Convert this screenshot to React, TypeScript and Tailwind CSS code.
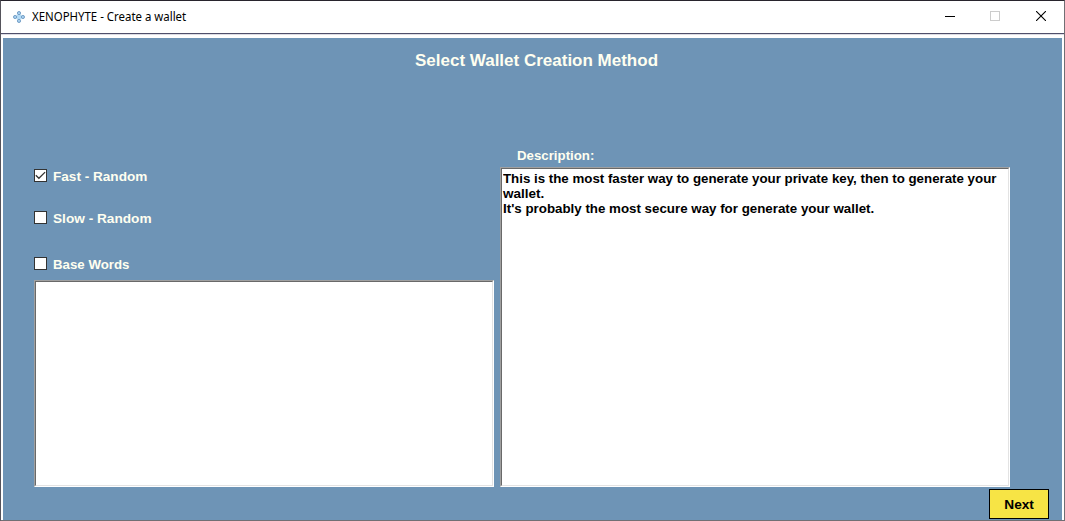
import { useState } from "react";

const methods = [
  { label: "Fast - Random", row: "h-[42px]", stretch: "scale-x-[1.045]" },
  { label: "Slow - Random", row: "h-[46px]", stretch: "scale-x-[1.05]" },
  { label: "Base Words", row: "h-[23px]", stretch: "scale-x-[1.02]" },
];

const description = [
  { text: "This is the most faster way to generate your private key, then to generate your", stretch: "scale-x-[1.023]" },
  { text: "wallet.", stretch: "scale-x-[1.04]" },
  { text: "It's probably the most secure way for generate your wallet.", stretch: "scale-x-[1.025]" },
];

const sunken =
  "border border-t-[#a0a0a0] border-l-[#a0a0a0] border-r-white border-b-white";
const sunkenInner =
  "h-full w-full border border-t-[#696969] border-l-[#696969] border-r-[#e3e3e3] border-b-[#e3e3e3] bg-white";

function AppIcon() {
  return (
    <svg width="12" height="12" viewBox="0 0 12 12" className="mb-px ml-[12px] shrink-0">
      <rect x="3.6" y="3.6" width="4.8" height="4.8" fill="#b5dbf5" />
      <g fill="#a9d0ef" stroke="#6a97c2" strokeWidth="0.9">
        <circle cx="6" cy="2.1" r="1.6" />
        <circle cx="2.1" cy="6" r="1.6" />
        <circle cx="9.9" cy="6" r="1.6" />
        <circle cx="6" cy="9.9" r="1.6" />
      </g>
    </svg>
  );
}

function TitleBar() {
  return (
    <header className="flex h-[32px] shrink-0 items-center bg-white">
      <AppIcon />
      <h1 className="ml-[7px] origin-left scale-x-[0.952] font-['Noto_Sans',sans-serif] text-[12px] leading-[16px] whitespace-nowrap text-black">
        XENOPHYTE - Create a wallet
      </h1>
      <div className="ml-auto flex h-full">
        <button aria-label="Minimize" className="flex w-[44px] items-center justify-center">
          <svg width="10" height="10" viewBox="0 0 10 10" shapeRendering="crispEdges"><path d="M0 4.5H10" stroke="#000" /></svg>
        </button>
        <button aria-label="Maximize" className="flex w-[46px] items-center justify-center">
          <svg width="10" height="10" viewBox="0 0 10 10" className="mb-[2px]" shapeRendering="crispEdges"><rect x="0.5" y="0.5" width="9" height="9" fill="none" stroke="#ccc" /></svg>
        </button>
        <button aria-label="Close" className="flex w-[46px] items-center justify-center">
          <svg width="10" height="10" viewBox="0 0 10 10" className="mb-[2px]"><path d="M0 0L10 10M10 0L0 10" stroke="#000" strokeWidth="1.1" /></svg>
        </button>
      </div>
    </header>
  );
}

export default function App() {
  const [selected, setSelected] = useState(0);
  return (
    <div className="flex h-[521px] w-[1065px] flex-col overflow-hidden border border-t-[#28242d] border-r-[#706f74] border-b-[#706f74] border-l-[#55535b] bg-white font-['Liberation_Sans',Arial,sans-serif]">
      <TitleBar />
      <div className="h-px shrink-0 bg-[#50506b]" />
      <div className="h-px shrink-0 bg-[#dcdce4]" />
      <main className="mt-[3px] mr-[2px] ml-[2px] flex min-h-0 flex-1 flex-col bg-[#6e94b6]">
        <h2 className="h-[109px] shrink-0 pt-[13px] pl-[8px] text-center text-[17px] leading-[20px] font-bold text-[#fffff0]">
          <span className="inline-block whitespace-nowrap">Select Wallet Creation Method</span>
        </h2>
        <div className="flex h-[340px] shrink-0 pl-[31px]">
          <section className="flex w-[460px] flex-col pt-[22px]">
            {methods.map((m, i) => (
              <div key={m.label} className={m.row}>
                <button
                  role="checkbox"
                  aria-checked={selected === i}
                  onClick={() => setSelected(i)}
                  className="flex items-start"
                >
                  <span className="flex h-[13px] w-[13px] shrink-0 items-center justify-center border border-[#333] bg-white">
                    {selected === i && (
                      <svg width="11" height="11" viewBox="0 0 11 11" fill="none"><path d="M0.8 5.2L3.9 8.3L10.1 2.1" stroke="#333" strokeWidth="1.3" /></svg>
                    )}
                  </span>
                  <span className={`ml-[6px] origin-left text-[13px] leading-[16px] font-bold whitespace-nowrap text-[#fffff0] ${m.stretch}`}>
                    {m.label}
                  </span>
                </button>
              </div>
            ))}
            <div className={`h-[207px] w-[460px] ${sunken}`}>
              <textarea aria-label="Base Words" className={`block resize-none outline-none ${sunkenInner}`} />
            </div>
          </section>
          <section className="ml-[6px] w-[510px]">
            <h3 className="h-[20px] pl-[17px] text-[13px] leading-[18px] font-bold text-[#fffff0]">
              <span className="inline-block origin-left scale-x-[1.02]">Description:</span>
            </h3>
            <div className={`h-[320px] ${sunken}`}>
              <div className={`overflow-hidden pt-[2px] pl-[1px] text-[13px] leading-[15px] font-bold text-black ${sunkenInner}`}>
                {description.map((d) => (
                  <p key={d.text} className={`w-max origin-left whitespace-nowrap ${d.stretch}`}>{d.text}</p>
                ))}
              </div>
            </div>
          </section>
        </div>
        <div className="flex justify-end pt-[2px] pr-[13px]">
          <button className="h-[30px] w-[60px] border border-black bg-[#f7e445] pt-px text-[13px] leading-[28px] font-bold text-black">
            <span className="inline-block scale-x-[1.05]">Next</span>
          </button>
        </div>
      </main>
    </div>
  );
}
